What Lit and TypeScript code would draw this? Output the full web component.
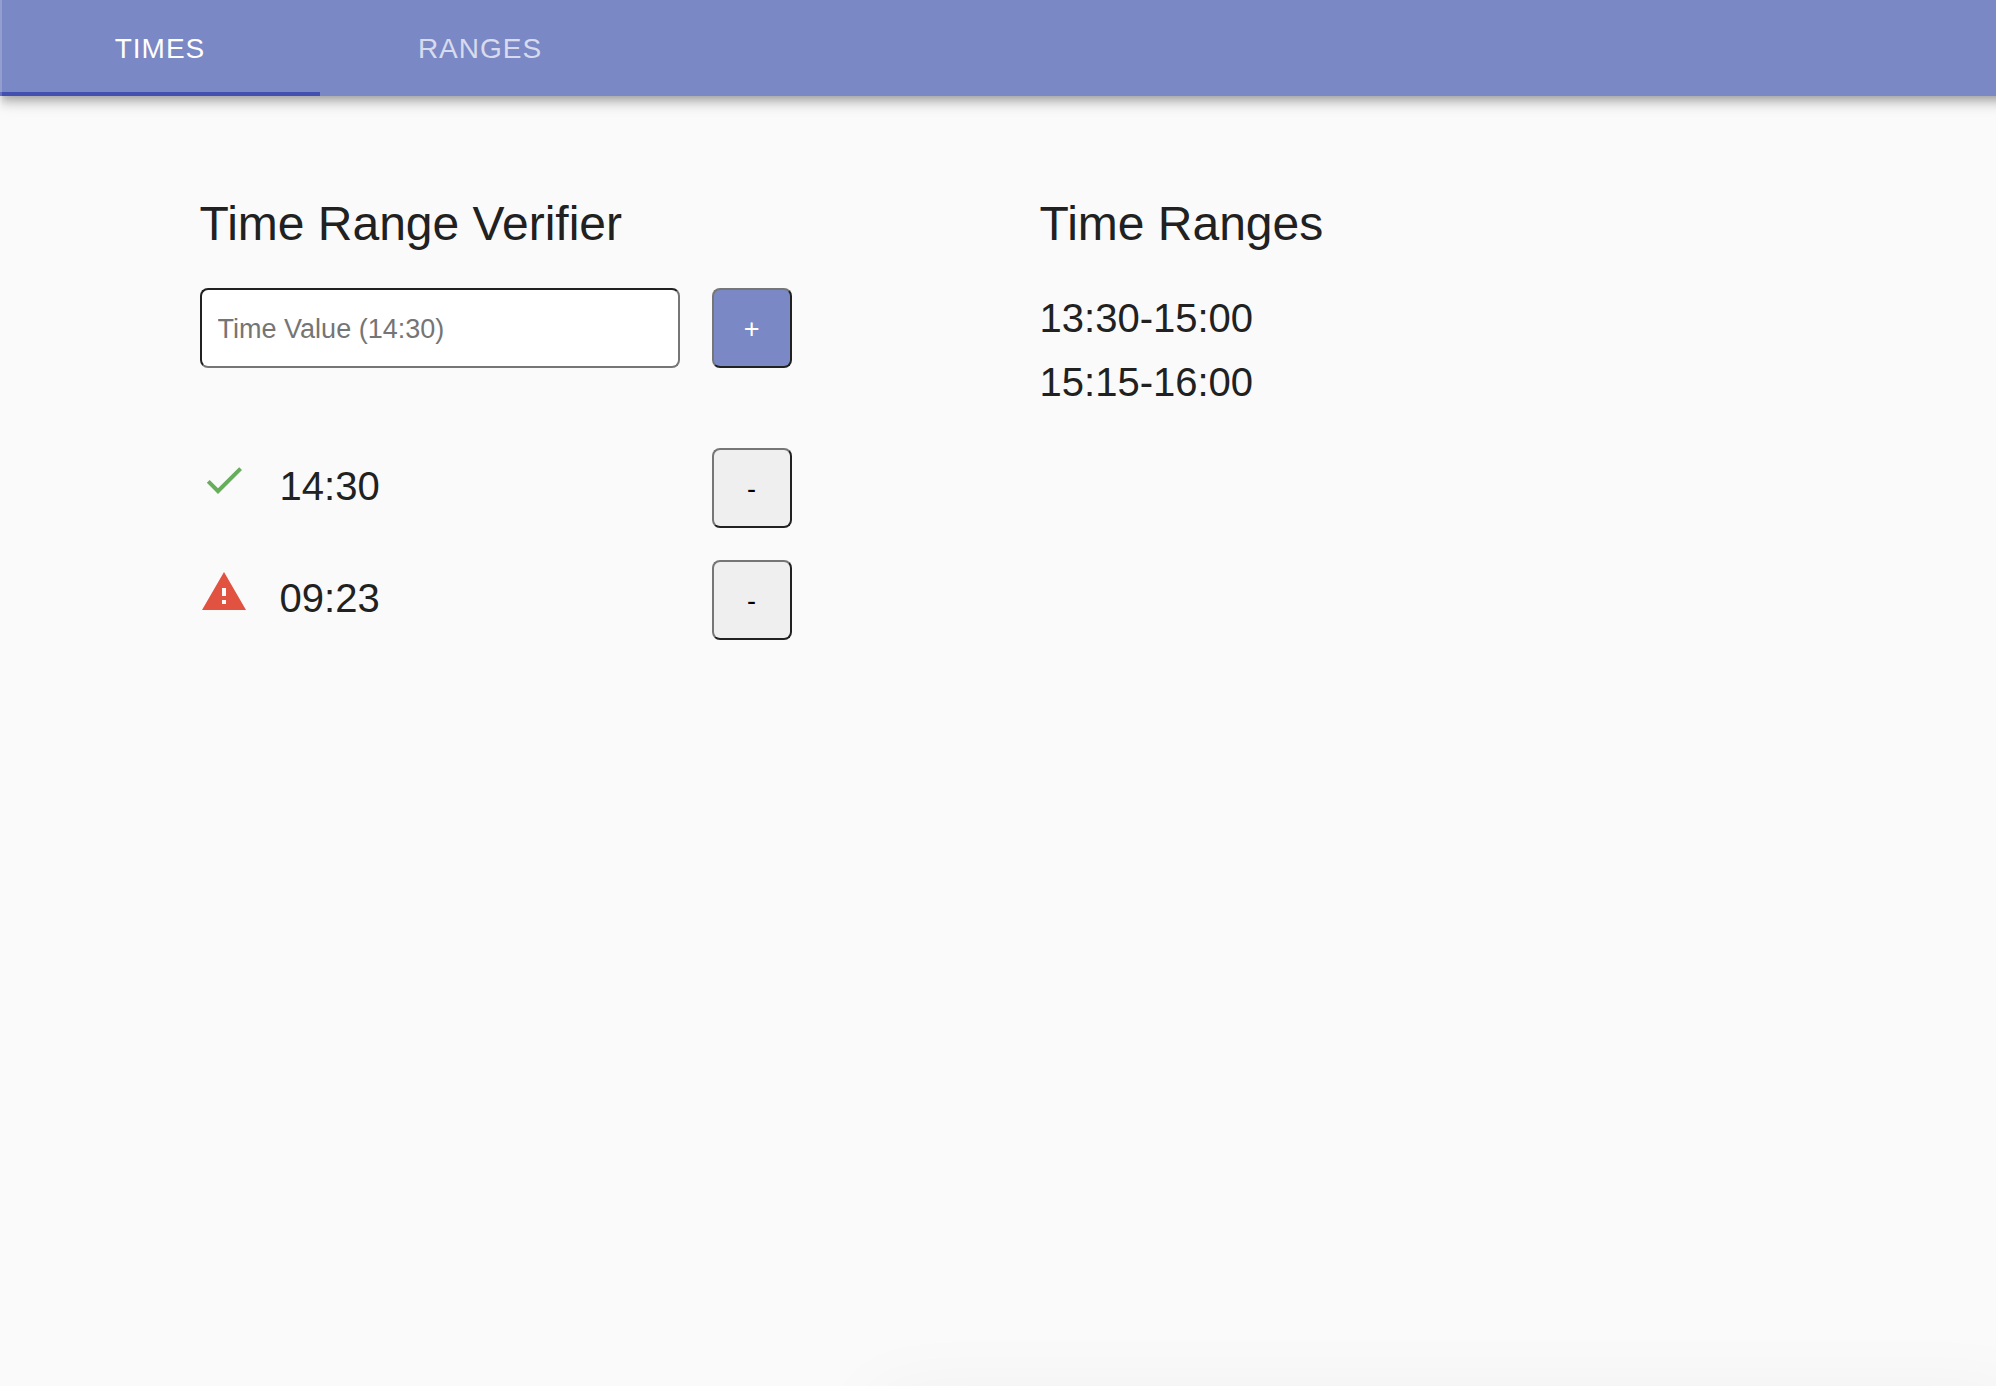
import { LitElement, html, css, svg } from "lit";
import { customElement, state } from "lit/decorators.js";

interface TimeEntry {
  value: string;
  valid: boolean;
}

const TABS = ["Times", "Ranges"];

const checkIcon = svg`<path d="M9 16.17L4.83 12l-1.42 1.41L9 19 21 7l-1.41-1.41z"></path>`;
const warningIcon = svg`<path d="M1 21h22L12 2 1 21zm12-3h-2v-2h2v2zm0-4h-2v-4h2v4z"></path>`;

@customElement("app-root")
export class AppRoot extends LitElement {
  @state() private activeTab = 0;
  @state() private times: TimeEntry[] = [
    { value: "14:30", valid: true },
    { value: "09:23", valid: false },
  ];
  @state() private ranges = ["13:30-15:00", "15:15-16:00"];

  static styles = css`
    :host {
      display: block;
      position: relative;
      box-sizing: border-box;
      min-height: 100vh;
      overflow: hidden;
      background: #fafafa;
      color: #212121;
      font-family: Helvetica, "Liberation Sans", Arial, sans-serif;
    }
    *,
    *::before,
    *::after {
      box-sizing: border-box;
    }
    .edge {
      position: absolute;
      inset: 0 auto 0 0;
      width: 2px;
      background: rgba(250, 250, 250, 0.2);
      pointer-events: none;
    }
    .bar {
      display: flex;
      margin-right: -24px;
      background: #7a88c5;
      box-shadow:
        0 4px 8px -2px rgba(0, 0, 0, 0.2),
        0 8px 10px 0 rgba(0, 0, 0, 0.14),
        0 2px 20px 0 rgba(0, 0, 0, 0.12);
    }
    .tab {
      width: 320px;
      height: 96px;
      padding: 6px 24px 0;
      border: 0;
      border-bottom: 4px solid transparent;
      background: none;
      color: #fff;
      opacity: 0.7;
      font: inherit;
      font-size: 28px;
      letter-spacing: 1px;
      text-transform: uppercase;
      cursor: pointer;
    }
    .tab.active {
      border-bottom-color: #4350af;
      opacity: 1;
    }
    .content {
      display: grid;
      grid-template-columns: 592px 1fr;
      column-gap: 248px;
      padding: 96px 10%;
    }
    .title {
      margin: 0 0 32px;
      font-size: 48px;
      line-height: 64px;
      font-weight: 400;
    }
    .entry {
      display: flex;
      gap: 32px;
      margin-bottom: 80px;
    }
    .field {
      flex: 1;
      min-width: 0;
      height: 80px;
      padding: 2px 16px 0;
      border: 2px solid;
      border-color: #212121 #767676 #767676 #212121;
      border-radius: 8px;
      background: #fff;
      color: #212121;
      font: inherit;
      font-size: 27px;
    }
    .field::placeholder {
      color: #757575;
      opacity: 1;
    }
    .square {
      flex: none;
      width: 80px;
      height: 80px;
      padding: 2px 0 0;
      border: 2px solid;
      border-color: #767676 #212121 #212121 #767676;
      border-radius: 8px;
      background: #efefef;
      color: #000;
      font: inherit;
      font-size: 27px;
      cursor: pointer;
    }
    .square.add {
      background: #7a88c5;
      color: #fff;
    }
    .list {
      display: flex;
      flex-direction: column;
      margin: 0;
      padding: 0;
      list-style: none;
      font-size: 40px;
    }
    .times {
      gap: 32px;
    }
    .time {
      display: flex;
      align-items: flex-start;
      gap: 32px;
    }
    .icon {
      width: 48px;
      height: 48px;
      margin-top: 8px;
      fill: #e15241;
    }
    .icon.valid {
      fill: #67ad5b;
    }
    .value {
      flex: 1;
      line-height: 76px;
    }
    .range {
      line-height: 60px;
      padding-bottom: 4px;
    }
    .glow {
      position: absolute;
      left: 44%;
      right: -24px;
      bottom: -60px;
      height: 40px;
      box-shadow: 0 0 80px 0 rgba(0, 0, 0, 0.08);
      pointer-events: none;
    }
  `;

  private addTime() {
    const field = this.renderRoot.querySelector<HTMLInputElement>(".field");
    const value = field?.value.trim();
    if (!field || !value) return;
    const valid = this.ranges.some((range) => {
      const [from, to] = range.split("-");
      return value >= from && value <= to;
    });
    this.times = [...this.times, { value, valid }];
    field.value = "";
  }

  private removeTime(index: number) {
    this.times = this.times.filter((_, i) => i !== index);
  }

  render() {
    return html`
      <header class="bar" role="tablist">
        ${TABS.map(
          (label, i) => html`<button
            class="tab ${i === this.activeTab ? "active" : ""}"
            role="tab"
            aria-selected=${i === this.activeTab}
            @click=${() => (this.activeTab = i)}
          >${label}</button>`
        )}
      </header>
      <main class="content">
        <section>
          <h1 class="title">Time Range Verifier</h1>
          <div class="entry">
            <input class="field" type="text" aria-label="Time value" placeholder="Time Value (14:30)" />
            <button class="square add" aria-label="Add time" @click=${this.addTime}>+</button>
          </div>
          <ul class="list times">
            ${this.times.map(
              (time, i) => html`<li class="time">
                <svg class="icon ${time.valid ? "valid" : ""}" viewBox="0 0 24 24" aria-hidden="true">
                  ${time.valid ? checkIcon : warningIcon}
                </svg>
                <span class="value">${time.value}</span>
                <button class="square" aria-label="Remove ${time.value}" @click=${() => this.removeTime(i)}>-</button>
              </li>`
            )}
          </ul>
        </section>
        <section>
          <h2 class="title">Time Ranges</h2>
          <ul class="list">
            ${this.ranges.map((range) => html`<li class="range">${range}</li>`)}
          </ul>
        </section>
      </main>
      <div class="glow"></div>
      <div class="edge"></div>
    `;
  }
}
